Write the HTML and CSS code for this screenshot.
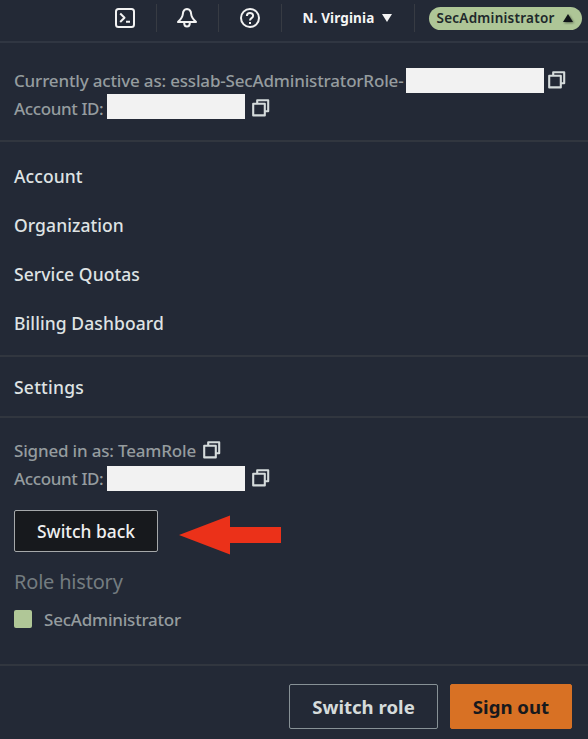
FILE: index.html
```
<!DOCTYPE html>
<html lang="en">
<head>
<meta charset="utf-8">
<title>Account menu</title>
<link rel="stylesheet" href="styles.css">
</head>
<body>
<svg class="defs" width="0" height="0" aria-hidden="true">
  <symbol id="copy" viewBox="0 0 18 18">
    <path d="M5.2 4.4V1.2H16.2V12.2H13.2M1.2 4.8H12.8V16.4H1.2Z" fill="none" stroke="currentColor" stroke-width="2.1" stroke-linejoin="round"/>
  </symbol>
</svg>
<header class="topbar">
  <div class="cell cell-shell">
    <svg class="icon" viewBox="0 0 22 22"><rect x="2" y="2" width="18" height="18" rx="2.5"/><path d="M6.2 6.5 10.5 10.8 6.2 15M12 14.8h4"/></svg>
  </div>
  <div class="cell">
    <svg class="icon" viewBox="0 0 22 22"><path d="M11 2C8.4 2.2 7 4.2 6.8 7.2C6.6 10.6 4.6 12.4 2 15H20C17.4 12.4 15.4 10.6 15.2 7.2C15 4.2 13.6 2.2 11 2ZM8.2 16C8.2 20.8 13.8 20.8 13.8 16"/></svg>
  </div>
  <div class="cell">
    <svg class="icon" viewBox="0 0 22 22"><circle cx="11" cy="11" r="9"/><path d="M7.9 8.9C7.9 4.9 14.1 5 14.1 8.7C14.1 11.2 11 11 11 13.4M11 15v2"/></svg>
  </div>
  <div class="cell cell-region"><span class="region">N. Virginia</span><svg class="caret" viewBox="0 0 10 8"><path d="M0 0H10L5 8Z"/></svg></div>
  <div class="cell cell-role"><div class="pill"><span>SecAdministrator</span><svg class="caret up" viewBox="0 0 10 8"><path d="M0 8H10L5 0Z"/></svg></div></div>
</header>
<main>
  <section class="identity">
    <div class="line"><span class="active">Currently active as: esslab-SecAdministratorRole-</span><span class="mask mask-a"></span><svg class="copy"><use href="#copy"/></svg></div>
    <div class="line"><span class="acct">Account ID:</span><span class="mask mask-b"></span><svg class="copy gap"><use href="#copy"/></svg></div>
  </section>
  <nav class="links">
    <a>Account</a>
    <a>Organization</a>
    <a>Service Quotas</a>
    <a>Billing Dashboard</a>
  </nav>
  <nav class="settings"><a>Settings</a></nav>
  <section class="session">
    <div class="line"><span class="signed">Signed in as: TeamRole</span><svg class="copy"><use href="#copy"/></svg></div>
    <div class="line"><span class="acct">Account ID:</span><span class="mask mask-c"></span><svg class="copy gap"><use href="#copy"/></svg></div>
    <div class="action"><button class="back">Switch back</button><svg class="arrow" viewBox="0 0 102 40"><path d="M0 20 51 .5V12H102V28H51V39.5Z"/></svg></div>
    <h2>Role history</h2>
    <div class="history"><i class="swatch"></i><span>SecAdministrator</span></div>
  </section>
</main>
<footer><button class="role">Switch role</button><button class="out">Sign out</button></footer>
</body>
</html>
```
FILE: styles.css
```
* { box-sizing: border-box; }
body { margin: 0; width: 588px; height: 739px; overflow: hidden; background: #232936; color: #959c9f; font-family: "Noto Sans", "Open Sans", sans-serif; font-size: 17px; font-weight: 500; display: flex; flex-direction: column; white-space: nowrap; }
.defs { position: absolute; }
.topbar { height: 43px; flex: none; display: flex; align-items: flex-start; padding: 4px 0 0 94px; border-bottom: 2px solid #303642; }
.cell { width: 62.5px; height: 28px; display: flex; align-items: center; justify-content: center; border-right: 1px solid #373b43; color: #f5f5f5; font-size: 13.5px; font-weight: 700; }
.cell-region { width: 133px; justify-content: flex-start; padding-left: 21px; }
.cell-role { border: 0; width: auto; padding-left: 14px; }
.icon { width: 22px; height: 22px; fill: none; stroke: #f2f2f2; stroke-width: 2; stroke-linejoin: round; }
.caret { width: 10px; height: 8px; fill: currentColor; margin-left: 8px; }
.region { width: 71px; letter-spacing: .13px; }
.pill { display: flex; align-items: center; width: 153px; height: 23px; padding-left: 8px; border-radius: 12px; background: #aec697; color: #20282a; font-weight: 600; letter-spacing: .25px; }
.pill span { width: 118px; }
.up { color: #101418; filter: drop-shadow(1px 1px 1px #58664f); }
main { flex: 1; }
.identity { height: 99px; padding: 23px 14px 0; border-bottom: 2px solid #31363f; }
.line { height: 28px; display: flex; align-items: center; }
.active { width: 392px; letter-spacing: -.17px; }
.acct { width: 93px; letter-spacing: -.38px; }
.signed { width: 189px; letter-spacing: -.18px; }
.mask { width: 138px; height: 25px; background: #f2f2f2; }
.mask-a { margin-top: 1px; }
.mask-b { margin-top: -3px; }
.mask-c { margin-top: 1px; }
.copy { width: 18px; height: 18px; flex: none; color: #d5dbdb; }
.mask-a + .copy { margin-left: 4px; }
.gap { margin-left: 7px; }
a { display: block; height: 49px; line-height: 49px; color: #dfe3e4; font-size: 17.5px; letter-spacing: .08px; }
.links { height: 215px; padding: 10px 14px 0; border-bottom: 2px solid #31363f; }
.settings { height: 61px; padding: 6px 14px 0; border-bottom: 2px solid #31363f; }
.settings a { letter-spacing: .25px; }
.session { height: 248px; padding: 18px 14px 0; border-bottom: 2px solid #31363f; }
button { font: inherit; padding: 0; color: #d5dbdb; background: transparent; border: 1px solid #879196; border-radius: 2px; }
.action { display: flex; align-items: center; height: 42px; margin-top: 18px; }
.back { width: 144px; height: 42px; background: #17191d; border-color: #a5a8aa; color: #f0f0f0; font-size: 17.4px; }
.arrow { width: 102px; height: 40px; margin: 7px 0 0 21px; fill: #eb3119; }
h2 { margin: 16px 0 0; height: 28px; line-height: 28px; font-size: 20px; font-weight: 400; letter-spacing: -.2px; color: #747c80; }
.history { display: flex; align-items: center; height: 28px; margin-top: 9px; letter-spacing: -.22px; }
.swatch { width: 18px; height: 18px; border-radius: 2px; background: #b0c797; margin-right: 12px; }
footer { height: 73px; flex: none; display: flex; justify-content: flex-end; align-items: flex-start; gap: 12px; padding: 18px 16px 0 0; font-size: 18.6px; font-weight: 700; }
.role { width: 149px; height: 45px; }
.out { width: 122px; height: 45px; background: #d87124; border-color: #d87124; color: #17191d; }
```
